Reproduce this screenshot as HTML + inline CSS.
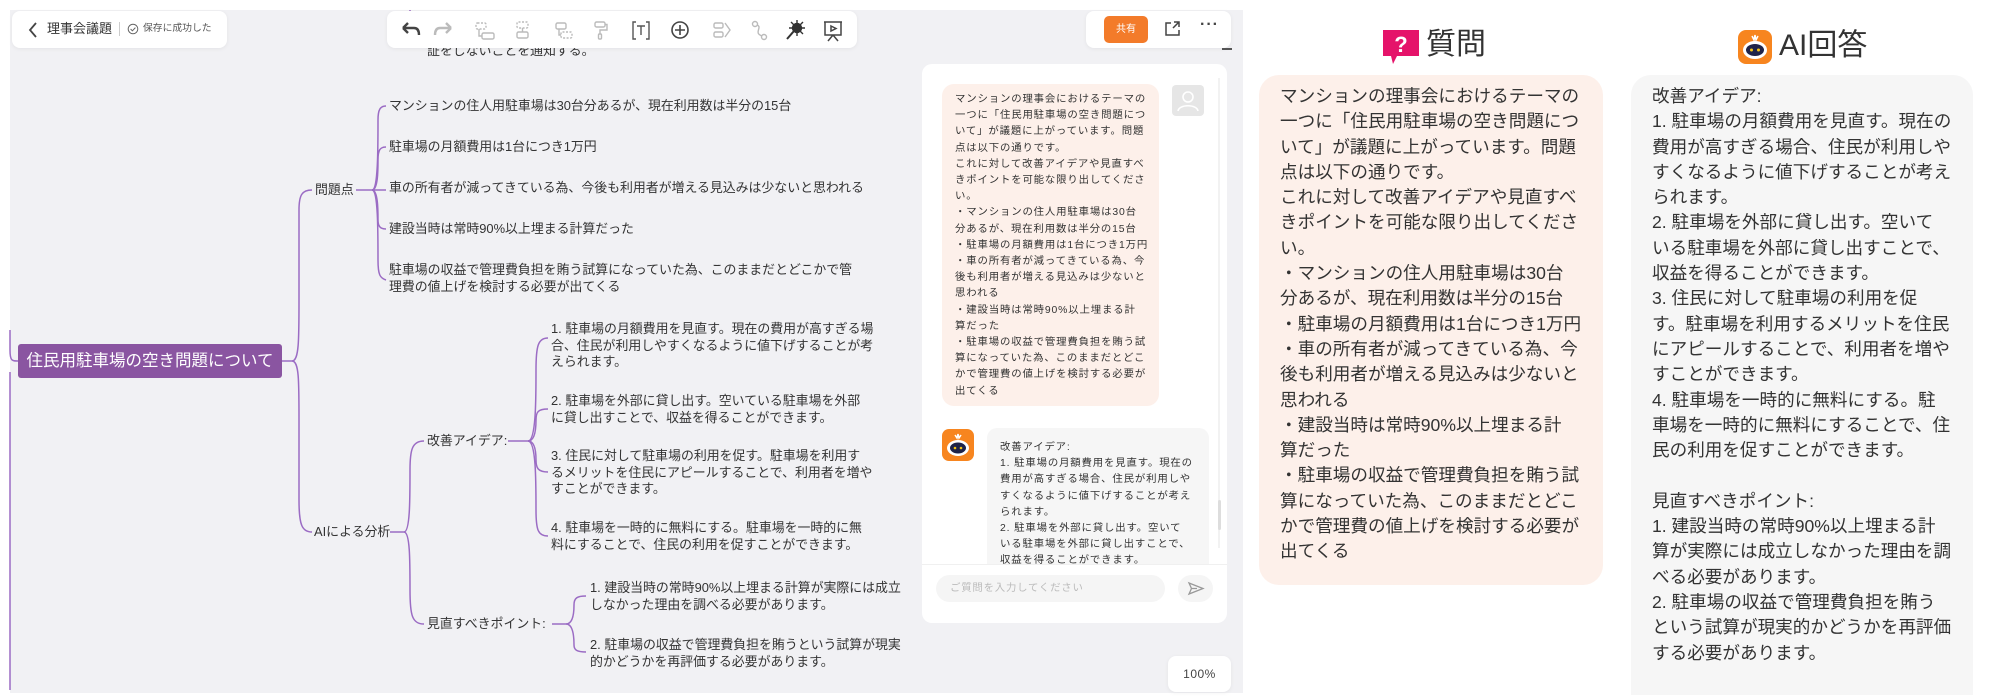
<!DOCTYPE html>
<html><head><meta charset="utf-8">
<style>
*{margin:0;padding:0;box-sizing:border-box}
body{width:2000px;height:699px;background:#fff;position:relative;overflow:hidden;font-family:"Liberation Sans","Noto Sans CJK JP",sans-serif;color:#333}
.abs{position:absolute}
#app{left:10px;top:10px;width:1233px;height:683px;background:#f1f1f4}
.card{background:#fff;border-radius:8px;box-shadow:0 1px 4px rgba(0,0,0,.06)}
.mm{position:absolute;font-size:12.9px;line-height:16.5px;color:#333;white-space:nowrap}
.chat{font-size:10.4px;line-height:16.2px;letter-spacing:0.85px;color:#333;white-space:nowrap}
.big{font-size:17.6px;line-height:25.3px;color:#333;white-space:nowrap}
</style></head><body>
<div id="app" class="abs"></div>

<svg class="abs" style="left:0;top:0" width="1243" height="699" fill="none" stroke="#9b6cc4" stroke-width="1.5">
<path d="M10 330 L10 350 C10 361 12 361 18 361"/>
<path d="M10 372 L10 690"/>
<path d="M410 10 L410 20"/>
<path d="M282 361 L292 361"/>
<path d="M292 361 C299 361 299 340 299 300 L299 210 C299 195 302 190 312 190"/>
<path d="M292 361 C299 361 299 380 299 420 L299 500 C299 525 302 532 312 532"/>
<path d="M356 190 L372 190"/>
<path d="M372 190 C378 190 378 150 378 120 C378 110 380 106 386 106"/>
<path d="M372 190 C378 190 378 170 378 160 C378 150 380 147 386 147"/>
<path d="M372 190 L386 190"/>
<path d="M372 190 C378 190 378 210 378 220 C378 226 380 229 386 229"/>
<path d="M372 190 C378 190 378 230 378 260 C378 275 380 278 386 280"/>
<path d="M390 532 L404 532"/>
<path d="M404 532 C410 532 410 500 410 470 C410 450 412 441 424 441"/>
<path d="M404 532 C410 532 410 560 410 590 C410 615 412 624 424 624"/>
<path d="M508 441 L528 441"/>
<path d="M528 441 C536 441 536 400 536 370 C536 346 538 338 548 338"/>
<path d="M528 441 C536 441 536 425 536 420 C536 412 538 409 548 409"/>
<path d="M528 441 C536 441 536 455 536 460 C536 468 538 472 548 472"/>
<path d="M528 441 C536 441 536 480 536 510 C536 530 538 536 548 536"/>
<path d="M552 624 L566 624"/>
<path d="M566 624 C574 624 574 610 574 605 C574 598 577 596 586 596"/>
<path d="M566 624 C574 624 574 640 574 645 C574 650 577 652 586 652"/>
</svg>

<div class="abs" style="left:18px;top:344px;width:264px;height:34px;background:#8a55a1;border-radius:3px;color:#fff;font-size:16.5px;line-height:34px;text-align:center">住民用駐車場の空き問題について</div>

<div class="mm" style="left:427px;top:43px">証をしないことを通知する。</div>
<div class="mm" style="left:315px;top:182px">問題点</div>
<div class="mm" style="left:389px;top:98px">マンションの住人用駐車場は30台分あるが、現在利用数は半分の15台</div>
<div class="mm" style="left:389px;top:139px">駐車場の月額費用は1台につき1万円</div>
<div class="mm" style="left:389px;top:180px">車の所有者が減ってきている為、今後も利用者が増える見込みは少ないと思われる</div>
<div class="mm" style="left:389px;top:221px">建設当時は常時90%以上埋まる計算だった</div>
<div class="mm" style="left:389px;top:262px">駐車場の収益で管理費負担を賄う試算になっていた為、このままだとどこかで管<br>理費の値上げを検討する必要が出てくる</div>
<div class="mm" style="left:314px;top:524px">AIによる分析</div>
<div class="mm" style="left:427px;top:433px">改善アイデア:</div>
<div class="mm" style="left:551px;top:321px">1. 駐車場の月額費用を見直す。現在の費用が高すぎる場<br>合、住民が利用しやすくなるように値下げすることが考<br>えられます。</div>
<div class="mm" style="left:551px;top:393px">2. 駐車場を外部に貸し出す。空いている駐車場を外部<br>に貸し出すことで、収益を得ることができます。</div>
<div class="mm" style="left:551px;top:448px">3. 住民に対して駐車場の利用を促す。駐車場を利用す<br>るメリットを住民にアピールすることで、利用者を増や<br>すことができます。</div>
<div class="mm" style="left:551px;top:520px">4. 駐車場を一時的に無料にする。駐車場を一時的に無<br>料にすることで、住民の利用を促すことができます。</div>
<div class="mm" style="left:427px;top:616px">見直すべきポイント:</div>
<div class="mm" style="left:590px;top:580px">1. 建設当時の常時90%以上埋まる計算が実際には成立<br>しなかった理由を調べる必要があります。</div>
<div class="mm" style="left:590px;top:637px">2. 駐車場の収益で管理費負担を賄うという試算が現実<br>的かどうかを再評価する必要があります。</div>

<div class="abs card" style="left:12px;top:11px;width:215px;height:37px"></div>
<svg class="abs" style="left:26px;top:20px" width="14" height="20"><path d="M10 3 L4 10 L10 17" stroke="#444" stroke-width="1.8" fill="none"/></svg>
<div class="abs" style="left:47px;top:20px;font-size:13px;line-height:18px;color:#333">理事会議題</div>
<div class="abs" style="left:119px;top:22px;width:1px;height:14px;background:#ccc"></div>
<svg class="abs" style="left:127px;top:23px" width="12" height="12"><circle cx="6" cy="6" r="4.8" stroke="#666" fill="none"/><path d="M3.6 6 L5.4 7.8 L8.4 4.6" stroke="#666" fill="none"/></svg>
<div class="abs" style="left:143px;top:22px;font-size:9.8px;line-height:14px;color:#555">保存に成功した</div>

<div class="abs card" style="left:387px;top:11px;width:470px;height:37px"></div>
<svg class="abs" style="left:387px;top:11px" width="470" height="37" fill="none" stroke="#bbb" stroke-width="1.4">
<path d="M16 19 L27 19 C31 19 32 22 32 26 M16 19 L21 14 M16 19 L21 24" stroke="#444" stroke-width="2.4" transform="translate(0,-2)"/>
<path d="M64 17 L53 17 C49 17 48 20 48 24 M64 17 L59 12 M64 17 L59 22" stroke="#bbb" stroke-width="2.4"/>
<rect x="89" y="12" width="10" height="6" rx="1.5" stroke-dasharray="2 1.5"/><rect x="95" y="22" width="12" height="6" rx="1.5"/><path d="M92 18 L92 25 L95 25"/>
<rect x="130" y="11" width="11" height="6" rx="1.5" stroke-dasharray="2 1.5"/><rect x="130" y="21" width="11" height="6" rx="1.5"/><path d="M135.5 17 L135.5 21"/>
<rect x="169" y="12" width="10" height="6" rx="1.5"/><rect x="174" y="21" width="11" height="6" rx="1.5" stroke-dasharray="2 1.5"/><path d="M172 18 L172 24 L174 24"/>
<rect x="208" y="11" width="10" height="5" rx="1.5"/><path d="M218 13.5 L220 13.5 L220 19 L213 19 L213 23"/><rect x="211.5" y="23" width="3" height="5" rx="1"/>
<path d="M249 11 L246 11 L246 28 L249 28 M259 11 L262 11 L262 28 L259 28 M250 15 L258 15 M254 15 L254 24" stroke="#555"/>
<circle cx="293" cy="19" r="8" stroke="#444" stroke-width="1.6"/><path d="M293 14 L293 24 M288 19 L298 19" stroke="#444" stroke-width="1.6"/>
<rect x="327" y="12" width="9" height="5" rx="1.5"/><rect x="327" y="21" width="9" height="5" rx="1.5"/><path d="M338 12 L343 19 L338 26"/>
<circle cx="368" cy="13" r="2.5"/><circle cx="377" cy="26" r="2.5"/><path d="M370 14 C376 16 366 22 375 25"/>
<path d="M400 28 L407 20" stroke="#333" stroke-width="2"/><circle cx="410" cy="17" r="4.5" fill="#333" stroke="#333"/><path d="M410 9 L410 25 M402 17 L418 17 M404 11 L416 23 M416 11 L404 23" stroke="#333"/>
<path d="M437 11 L455 11 M438 11 L438 24 L454 24 L454 11 M446 24 L441 30 M446 24 L451 30 M444 15 L449 17.5 L444 20 Z" stroke="#444" stroke-width="1.5"/>
</svg>

<div class="abs card" style="left:1086px;top:11px;width:145px;height:37px"></div>
<div class="abs" style="left:1104px;top:16px;width:44px;height:27px;background:#f37b2a;border-radius:5px;color:#fff;font-size:10px;line-height:27px;text-align:center">共有</div>
<svg class="abs" style="left:1164px;top:20px" width="18" height="18" fill="none" stroke="#444" stroke-width="1.5"><path d="M7 3 L2 3 L2 15 L15 15 L15 10 M9 8 L15 2 M10 2 L15 2 L15 7"/></svg>
<div class="abs" style="left:1200px;top:16px;font-size:16px;letter-spacing:1px;color:#444;font-weight:bold">···</div>

<div class="abs" style="left:922px;top:64px;width:305px;height:559px;background:#fff;border-radius:10px"></div>
<div class="abs" style="left:1222px;top:48px;width:10px;height:1.5px;background:#555"></div>
<div class="abs" style="left:1218px;top:78px;width:2px;height:470px;background:#f2f2f2"></div>
<div class="abs" style="left:1218px;top:500px;width:3px;height:30px;background:#ddd;border-radius:2px"></div>
<div class="abs" style="left:942px;top:84px;width:217px;height:322px;background:#fdf0ea;border-radius:12px"></div>
<div class="abs chat" style="left:955px;top:92px">マンションの理事会におけるテーマの<br>一つに「住民用駐車場の空き問題につ<br>いて」が議題に上がっています。問題<br>点は以下の通りです。<br>これに対して改善アイデアや見直すべ<br>きポイントを可能な限り出してくださ<br>い。<br>・マンションの住人用駐車場は30台<br>分あるが、現在利用数は半分の15台<br>・駐車場の月額費用は1台につき1万円<br>・車の所有者が減ってきている為、今<br>後も利用者が増える見込みは少ないと<br>思われる<br>・建設当時は常時90%以上埋まる計<br>算だった<br>・駐車場の収益で管理費負担を賄う試<br>算になっていた為、このままだとどこ<br>かで管理費の値上げを検討する必要が<br>出てくる</div>
<div class="abs" style="left:1172px;top:85px;width:32px;height:31px;background:#e6e6e6;border-radius:4px"></div>
<svg class="abs" style="left:1172px;top:85px" width="32" height="31" fill="none" stroke="#fff" stroke-width="1.6"><circle cx="16" cy="12" r="5"/><path d="M6 26 C7 19 25 19 26 26"/></svg>
<svg class="abs" style="left:942px;top:429px" width="32" height="32"><rect width="32" height="32" rx="7" fill="#f7851f"/><path d="M13 6 L15 9 L16 5 L17 9 L19 6" stroke="#fff" stroke-width="1.5" fill="none"/><ellipse cx="16" cy="19" rx="11" ry="8" fill="#fff"/><ellipse cx="16" cy="19" rx="8" ry="5.5" fill="#1f2348"/><circle cx="13" cy="19" r="1.3" fill="#f5c518"/><circle cx="19" cy="19" r="1.3" fill="#f5c518"/></svg>
<div class="abs" style="left:987px;top:428px;width:222px;height:136px;background:#f6f6f6;border-radius:10px 10px 0 0"></div>
<div class="abs" style="left:987px;top:428px;width:222px;height:136px;overflow:hidden">
<div class="chat" style="padding:12px 0 0 13px">改善アイデア:<br>1. 駐車場の月額費用を見直す。現在の<br>費用が高すぎる場合、住民が利用しや<br>すくなるように値下げすることが考え<br>られます。<br>2. 駐車場を外部に貸し出す。空いて<br>いる駐車場を外部に貸し出すことで、<br>収益を得ることができます。</div></div>
<div class="abs" style="left:922px;top:564px;width:305px;height:1px;background:#f0f0f0"></div>
<div class="abs" style="left:936px;top:575px;width:229px;height:27px;background:#f5f5f5;border-radius:14px;font-size:10.4px;letter-spacing:.8px;color:#bbb;line-height:27px;padding-left:14px">ご質問を入力してください</div>
<div class="abs" style="left:1178px;top:575px;width:35px;height:27px;background:#f5f5f5;border-radius:14px"></div>
<svg class="abs" style="left:1187px;top:580px" width="18" height="17" fill="none" stroke="#999" stroke-width="1.3"><path d="M2 3 L16 8.5 L2 14 L4.5 8.5 Z M4.5 8.5 L10 8.5"/></svg>
<div class="abs card" style="left:1168px;top:656px;width:63px;height:36px;font-size:12px;color:#444;text-align:center;line-height:36px;letter-spacing:.5px">100%</div>

<svg class="abs" style="left:1381px;top:28px" width="40" height="38"><path d="M2 2 H38 V28 H16 L12 36 L10 28 H2 Z" fill="#e5136a"/><text x="20" y="24" font-family="Liberation Sans" font-weight="bold" font-size="22" fill="#fff" text-anchor="middle">?</text></svg>
<div class="abs" style="left:1426px;top:27px;font-size:30px;line-height:36px;color:#333">質問</div>
<div class="abs" style="left:1259px;top:75px;width:344px;height:510px;background:#fdf0ea;border-radius:20px"></div>
<div class="abs big" style="left:1280px;top:84px">マンションの理事会におけるテーマの<br>一つに「住民用駐車場の空き問題につ<br>いて」が議題に上がっています。問題<br>点は以下の通りです。<br>これに対して改善アイデアや見直すべ<br>きポイントを可能な限り出してくださ<br>い。<br>・マンションの住人用駐車場は30台<br>分あるが、現在利用数は半分の15台<br>・駐車場の月額費用は1台につき1万円<br>・車の所有者が減ってきている為、今<br>後も利用者が増える見込みは少ないと<br>思われる<br>・建設当時は常時90%以上埋まる計<br>算だった<br>・駐車場の収益で管理費負担を賄う試<br>算になっていた為、このままだとどこ<br>かで管理費の値上げを検討する必要が<br>出てくる</div>

<svg class="abs" style="left:1738px;top:30px" width="34" height="34"><rect width="34" height="34" rx="8" fill="#f7851f"/><path d="M14 6 L16 10 L17 5 L18 10 L20 6" stroke="#fff" stroke-width="1.5" fill="none"/><ellipse cx="17" cy="20" rx="12" ry="9" fill="#fff"/><ellipse cx="17" cy="20" rx="9" ry="6" fill="#1f2348"/><circle cx="13.5" cy="20" r="1.5" fill="#f5c518"/><circle cx="20.5" cy="20" r="1.5" fill="#f5c518"/></svg>
<div class="abs" style="left:1779px;top:28px;font-size:30px;line-height:36px;color:#333">AI回答</div>
<div class="abs" style="left:1631px;top:75px;width:342px;height:620px;background:#f6f6f6;border-radius:20px 20px 0 0"></div>
<div class="abs big" style="left:1652px;top:84px">改善アイデア:<br>1. 駐車場の月額費用を見直す。現在の<br>費用が高すぎる場合、住民が利用しや<br>すくなるように値下げすることが考え<br>られます。<br>2. 駐車場を外部に貸し出す。空いて<br>いる駐車場を外部に貸し出すことで、<br>収益を得ることができます。<br>3. 住民に対して駐車場の利用を促<br>す。駐車場を利用するメリットを住民<br>にアピールすることで、利用者を増や<br>すことができます。<br>4. 駐車場を一時的に無料にする。駐<br>車場を一時的に無料にすることで、住<br>民の利用を促すことができます。<br><br>見直すべきポイント:<br>1. 建設当時の常時90%以上埋まる計<br>算が実際には成立しなかった理由を調<br>べる必要があります。<br>2. 駐車場の収益で管理費負担を賄う<br>という試算が現実的かどうかを再評価<br>する必要があります。</div>
</body></html>
